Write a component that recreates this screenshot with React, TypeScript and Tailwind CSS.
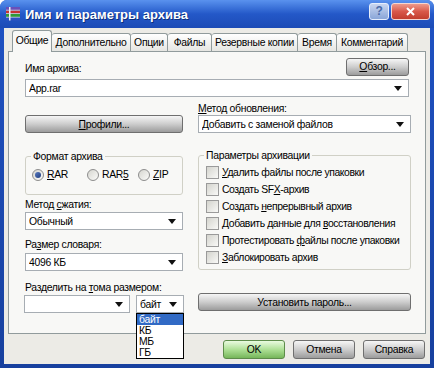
import React from 'react';

const btn =
  'flex items-center justify-center h-[18px] rounded-[3px] border border-[#6f6f6f] bg-gradient-to-b from-[#f6f6f6] via-[#cdcdcd] to-[#9c9c9c] text-black';

function Arrow() {
  return (
    <svg width="8" height="5" viewBox="0 0 8 5" className="shrink-0">
      <path d="M0 0 H8 L4 5 Z" fill="#111" />
    </svg>
  );
}

function Combo({ value, className = '' }: { value: string; className?: string }) {
  return (
    <div
      className={`flex items-center h-[18px] border border-[#a7adb3] bg-white pl-[3px] pr-[6px] ${className}`}
    >
      <span className="flex-1 truncate">{value}</span>
      <Arrow />
    </div>
  );
}

function Radio({ checked, children, className = '' }: { checked?: boolean; children: React.ReactNode; className?: string }) {
  return (
    <div className={`flex items-center gap-[3px] ${className}`}>
      <div className="flex items-center justify-center w-[12px] h-[12px] rounded-full border border-[#8d8d8d] bg-gradient-to-br from-[#d6d6d0] to-[#fbfbf9]">
        {checked && <div className="w-[6px] h-[6px] rounded-full bg-gradient-to-br from-[#5b7bbf] to-[#1f3d80]" />}
      </div>
      <span>{children}</span>
    </div>
  );
}

function Check({ children }: { children: React.ReactNode }) {
  return (
    <div className="flex items-center h-[17px] gap-[3px] whitespace-nowrap">
      <div className="w-[13px] h-[13px] shrink-0 border border-[#9a9a9a] bg-gradient-to-br from-[#d4d4ce] to-[#f9f9f7]" />
      <span className="tracking-[-0.4px]">{children}</span>
    </div>
  );
}

const tabs = [
  { t: 'Дополнительно', w: 'w-[79px]' },
  { t: 'Опции', w: 'w-[37px]' },
  { t: 'Файлы', w: 'w-[44px]' },
  { t: 'Резервные копии', w: 'w-[86px]' },
  { t: 'Время', w: 'w-[39px]' },
  { t: 'Комментарий', w: 'w-[71px]' },
];

export default function App() {
  return (
    <div className="w-[434px] h-[368px] flex flex-col rounded-t-[7px] overflow-hidden bg-gradient-to-b from-[#1f52c4] to-[#17409e] text-[10.4px] leading-[13px] tracking-[-0.3px] text-black font-['Liberation_Sans',Arial,sans-serif]">
      {/* title bar */}
      <div className="h-[28px] shrink-0 flex items-center pl-[5px] pr-[4px] bg-gradient-to-b from-[#5a92ee] via-[#2458c8] to-[#1c4bb6]">
        <svg width="16" height="16" viewBox="0 0 16 16">
          <rect x="1" y="1" width="14" height="3" fill="#6a4fb8" />
          <rect x="1" y="4.5" width="14" height="3" fill="#c83232" />
          <rect x="1" y="8" width="14" height="3" fill="#2f9a3a" />
          <rect x="1" y="11.5" width="14" height="3" fill="#2d53c2" />
          <rect x="4" y="1" width="1.5" height="13.5" fill="#f2f2f2" />
          <rect x="1" y="3.8" width="14" height="0.7" fill="#e8e8e8" />
          <rect x="1" y="7.3" width="14" height="0.7" fill="#e8e8e8" />
          <rect x="1" y="10.8" width="14" height="0.7" fill="#e8e8e8" />
        </svg>
        <span className="ml-[4px] text-[13px] font-bold tracking-normal text-white [text-shadow:1px_1px_0_#0d2f7a]">
          Имя и параметры архива
        </span>
        <div className="ml-auto flex items-start self-start mt-[3px] gap-[2px]">
          <div className="w-[20px] h-[17px] rounded-[3px] border border-[#e6eefc] bg-gradient-to-b from-[#c9d6ef] to-[#8aa6d8] flex items-center justify-center text-[#4a6aa8] font-bold text-[12px]">
            ?
          </div>
          <div className="w-[39px] h-[17px] rounded-[3px] border border-[#f4d6d0] bg-gradient-to-b from-[#ec9a8c] via-[#d8584a] to-[#c23d2e] flex items-center justify-center">
            <svg width="9" height="9" viewBox="0 0 9 9">
              <path d="M1 1 L8 8 M8 1 L1 8" stroke="#fff" strokeWidth="2" />
            </svg>
          </div>
        </div>
      </div>

      {/* body */}
      <div className="flex-1 mx-[4px] mb-[4px] bg-[#ecebe6] flex flex-col px-[4px] pt-[2px]">
        {/* tabs */}
        <div className="flex items-end h-[22px] pl-[4px]">
          <div className="relative z-10 w-[40px] h-[22px] border-l border-t border-r border-[#919b9c] rounded-t-[3px] bg-[#f8f8f6] flex items-center justify-center pb-[2px]">
            Общие
          </div>
          {tabs.map((x) => (
            <div
              key={x.t}
              className={`${x.w} h-[18px] mb-[1px] border-t border-r border-[#919b9c] rounded-t-[3px] bg-gradient-to-b from-[#ffffff] to-[#e6e6e2] flex items-center justify-center whitespace-nowrap`}
            >
              {x.t}
            </div>
          ))}
        </div>

        {/* panel */}
        <div className="-mt-[1px] h-[283px] border border-[#919b9c] bg-[#f8f8f6] px-[16px] pt-[6px]">
          <div className="flex items-center justify-between h-[17px]">
            <span className="mt-[3px]">Имя архива:</span>
            <div className={`${btn} w-[63px] h-[17px]`}>
              <span>
                <u>О</u>бзор...
              </span>
            </div>
          </div>
          <Combo value="App.rar" className="mt-[4px]" />

          <div className="grid grid-cols-[158px_213px] gap-x-[15px]">
            {/* left column */}
            <div className="flex flex-col">
              <div className={`${btn} mt-[18px] h-[17px]`}>
                <span>
                  <u>П</u>рофили...
                </span>
              </div>
              <fieldset className="mt-[17px] border border-[#d0d0c6] rounded-[3px] pl-[6px] pb-[13px]">
                <legend className="px-[2px] -ml-[1px]">Формат архива</legend>
                <div className="flex mt-[5px] h-[13px]">
                  <Radio checked className="w-[55px]">
                    <u>R</u>AR
                  </Radio>
                  <Radio className="w-[51px]">
                    RAR<u>5</u>
                  </Radio>
                  <Radio>
                    <u>Z</u>IP
                  </Radio>
                </div>
              </fieldset>
              <span className="mt-[3px]">
                Метод <u>с</u>жатия:
              </span>
              <Combo value="Обычный" className="mt-[1px]" />
              <span className="mt-[8px]">
                Ра<u>з</u>мер словаря:
              </span>
              <Combo value="4096 КБ" className="mt-[2px]" />
              <span className="mt-[10px]">
                Разделить на <u>т</u>ома размером:
              </span>
              <div className="flex gap-[6px] mt-[1px] -ml-[1px] w-[160px]">
                <Combo value="" className="w-[106px]" />
                <div className="relative w-[48px]">
                  <Combo value="байт" />
                  <div className="absolute left-0 top-full w-full border border-[#000] bg-white z-20">
                    <div className="h-[11px] leading-[11px] pl-[2px] bg-[#316ac5] text-white">байт</div>
                    <div className="h-[11px] leading-[11px] pl-[2px]">КБ</div>
                    <div className="h-[11px] leading-[11px] pl-[2px]">МБ</div>
                    <div className="h-[11px] leading-[11px] pl-[2px]">ГБ</div>
                  </div>
                </div>
              </div>
            </div>

            {/* right column */}
            <div className="flex flex-col">
              <span className="mt-[5px]">
                <u>М</u>етод обновления:
              </span>
              <Combo value="Добавить с заменой файлов" />
              <fieldset className="mt-[16px] border border-[#d0d0c6] rounded-[3px] pl-[7px] pb-[3px]">
                <legend className="px-[2px] -ml-[2px]">Параметры архивации</legend>
                <div className="flex flex-col mt-[2px]">
                  <Check>
                    <u>У</u>далить файлы после упаковки
                  </Check>
                  <Check>
                    Создать SF<u>X</u>-архив
                  </Check>
                  <Check>
                    Создать <u>н</u>епрерывный архив
                  </Check>
                  <Check>
                    Добавить данные для <u>в</u>осстановления
                  </Check>
                  <Check>
                    Протестировать <u>ф</u>айлы после упаковки
                  </Check>
                  <Check>
                    <u>З</u>аблокировать архив
                  </Check>
                </div>
              </fieldset>
              <div className={`${btn} mt-[23px]`}>
                <span>Установить пароль...</span>
              </div>
            </div>
          </div>
        </div>

        {/* dialog buttons */}
        <div className="flex justify-end gap-[8px] mt-[6px] pr-[1px]">
          <div className="flex items-center justify-center w-[62px] h-[19px] rounded-[3px] border border-[#5d8c4a] bg-gradient-to-b from-[#eafbe0] via-[#aee096] to-[#76b65a]">
            OK
          </div>
          <div className={`${btn} w-[62px] h-[19px]`}>Отмена</div>
          <div className={`${btn} w-[62px] h-[19px]`}>Справка</div>
        </div>
      </div>
    </div>
  );
}
